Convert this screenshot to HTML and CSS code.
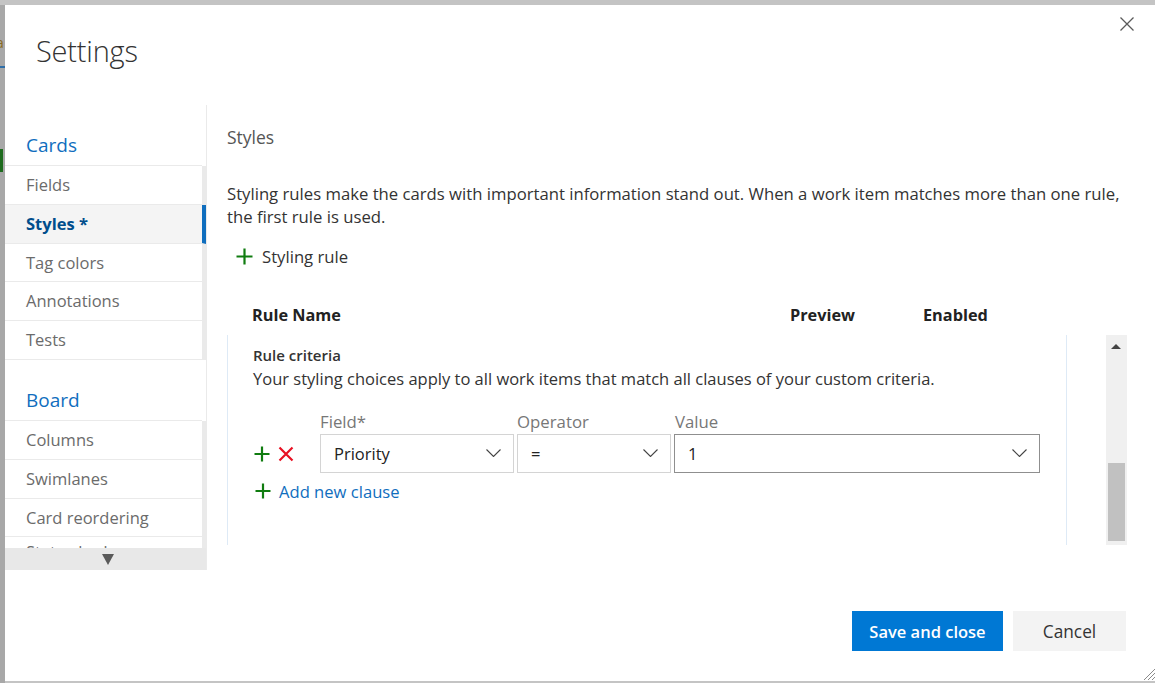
FILE: index.html
```html
<!DOCTYPE html>
<html>
<head>
<meta charset="utf-8">
<link rel="stylesheet" href="styles.css">
</head>
<body>
<div class="backdrop">
  <div class="under-left">
    <span class="under-a">a</span>
    <span class="under-line"></span>
    <span class="under-green"></span>
  </div>
  <div class="dialog">
    <button class="close" aria-label="Close">
      <svg width="14" height="14" viewBox="0 0 14 14"><path d="M0.5 0.5 L13.5 13.5 M13.5 0.5 L0.5 13.5" stroke="#5a5a5a" stroke-width="1.3" fill="none"/></svg>
    </button>
    <div class="dlg-header">
      <h1 class="title">Settings</h1>
    </div>
    <div class="dlg-body">
      <nav class="nav">
        <div class="nav-scroll">
          <div class="nav-group">Cards</div>
          <div class="nav-item">Fields</div>
          <div class="nav-item selected">Styles *</div>
          <div class="nav-item">Tag colors</div>
          <div class="nav-item">Annotations</div>
          <div class="nav-item last">Tests</div>
          <div class="nav-group">Board</div>
          <div class="nav-item">Columns</div>
          <div class="nav-item">Swimlanes</div>
          <div class="nav-item">Card reordering</div>
          <div class="nav-item partial">Status badge</div>
        </div>
        <div class="nav-down"><span class="tri-down"></span></div>
      </nav>
      <main class="content">
        <h2 class="section-title">Styles</h2>
        <p class="desc">Styling rules make the cards with important information stand out. When a work item matches more than one rule, the first rule is used.</p>
        <div class="add-rule">
          <svg class="plus" width="17" height="17" viewBox="0 0 17 17"><path d="M8.5 0.5 V16.5 M0.5 8.5 H16.5" stroke="#107c10" stroke-width="2.2" fill="none"/></svg>
          <span>Styling rule</span>
        </div>
        <div class="table-head">
          <span class="th-name">Rule Name</span>
          <span class="th-preview">Preview</span>
          <span class="th-enabled">Enabled</span>
        </div>
        <div class="scroll-box">
          <div class="rule-panel">
            <div class="crit-title">Rule criteria</div>
            <div class="crit-desc">Your styling choices apply to all work items that match all clauses of your custom criteria.</div>
            <div class="clause-labels">
              <span class="lbl lbl-field">Field*</span>
              <span class="lbl lbl-op">Operator</span>
              <span class="lbl">Value</span>
            </div>
            <div class="clause-row">
              <div class="row-icons">
                <svg width="16" height="16" viewBox="0 0 16 16"><path d="M8 0.5 V15.5 M0.5 8 H15.5" stroke="#107c10" stroke-width="2.2" fill="none"/></svg>
                <svg width="16" height="16" viewBox="0 0 16 16"><path d="M1.5 1.5 L14.5 14.5 M14.5 1.5 L1.5 14.5" stroke="#e81123" stroke-width="2.2" fill="none"/></svg>
              </div>
              <div class="dd dd-field"><span>Priority</span><svg class="chev" width="15" height="8" viewBox="0 0 15 8"><path d="M0.5 0.5 L7.5 7.5 L14.5 0.5" stroke="#444" stroke-width="1.1" fill="none"/></svg></div>
              <div class="dd dd-op"><span>=</span><svg class="chev" width="15" height="8" viewBox="0 0 15 8"><path d="M0.5 0.5 L7.5 7.5 L14.5 0.5" stroke="#444" stroke-width="1.1" fill="none"/></svg></div>
              <div class="dd dd-value"><span>1</span><svg class="chev" width="15" height="8" viewBox="0 0 15 8"><path d="M0.5 0.5 L7.5 7.5 L14.5 0.5" stroke="#444" stroke-width="1.1" fill="none"/></svg></div>
            </div>
            <div class="add-clause">
              <svg width="16" height="16" viewBox="0 0 16 16"><path d="M8 0.5 V15.5 M0.5 8 H15.5" stroke="#107c10" stroke-width="2.2" fill="none"/></svg>
              <span>Add new clause</span>
            </div>
          </div>
          <div class="vscroll">
            <span class="tri-up"></span>
            <span class="thumb"></span>
          </div>
        </div>
      </main>
    </div>
    <div class="dlg-footer">
      <button class="btn primary">Save and close</button>
      <button class="btn secondary">Cancel</button>
    </div>
    <svg class="grip" width="12" height="12" viewBox="0 0 12 12"><path d="M12 1 L1 12 M12 5 L5 12 M12 9 L9 12" stroke="#8a8a8a" stroke-width="1" fill="none"/></svg>
  </div>
</div>
</body>
</html>
```
FILE: styles.css
```css
* { box-sizing: border-box; }
html, body { margin: 0; padding: 0; }
body {
  width: 1155px;
  height: 683px;
  overflow: hidden;
  background: #c4c4c4;
  font-family: "Open Sans", "Noto Sans", sans-serif;
  color: #333;
}
.backdrop {
  display: flex;
  padding-top: 5px;
  height: 683px;
  position: relative;
}
.under-left {
  width: 5px;
  flex: none;
  background: #a8a8a8;
  position: relative;
  overflow: hidden;
}
.under-a {
  position: absolute;
  left: -4px;
  top: 28px;
  font-size: 14px;
  color: #8a6a20;
}
.under-line {
  position: absolute;
  left: 0;
  top: 61px;
  width: 5px;
  height: 2px;
  background: #2f6ea8;
}
.under-green {
  position: absolute;
  left: 0;
  top: 144px;
  width: 3px;
  height: 23px;
  background: #1e6b1e;
}
.dialog {
  width: 1150px;
  height: 676px;
  background: #fff;
  display: flex;
  flex-direction: column;
  position: relative;
}
.close {
  position: absolute;
  top: 12px;
  right: 21px;
  width: 14px;
  height: 14px;
  padding: 0;
  border: 0;
  background: transparent;
  display: flex;
}
.dlg-header {
  height: 100px;
  flex: none;
  padding: 28px 0 0 31px;
}
.title {
  margin: 0;
  font-size: 29px;
  line-height: 36px;
  font-weight: 300;
  color: #333;
  letter-spacing: -0.2px;
}
.dlg-body {
  height: 465px;
  flex: none;
  display: flex;
}
.nav {
  width: 202px;
  flex: none;
  border-right: 1px solid #eaeaea;
  display: flex;
  flex-direction: column;
}
.nav-scroll {
  height: 443px;
  overflow: hidden;
}
.nav-group {
  height: 61px;
  padding: 27px 0 0 21px;
  font-size: 19px;
  line-height: 26px;
  color: #106ebe;
  border-bottom: 1px solid #eaeaea;
  margin-right: 4px;
}
.nav-item {
  height: 38.8px;
  padding-left: 21px;
  font-size: 16.5px;
  line-height: 37px;
  color: #6b6b6b;
  border-bottom: 1px solid #eaeaea;
  border-right: 4px solid #eaeaea;
}
.nav-item.partial { line-height: 30px; }
.nav-item.selected {
  background: #f4f4f4;
  color: #004e8c;
  font-weight: 700;
  border-right-color: #106ebe;
}
.nav-down {
  height: 22px;
  background: #e8e8e8;
  display: flex;
  justify-content: center;
  align-items: center;
}
.tri-down {
  width: 0;
  height: 0;
  border-left: 6px solid transparent;
  border-right: 6px solid transparent;
  border-top: 11px solid #5a5a5a;
  margin-left: 4px;
}
.content {
  flex: 1;
  padding: 20px 0 0 20px;
}
.section-title {
  margin: 0;
  font-size: 17.5px;
  line-height: 24px;
  font-weight: 400;
  color: #555;
}
.desc {
  margin: 33px 0 0 0;
  width: 900px;
  font-size: 16.7px;
  line-height: 23px;
  color: #333;
}
.add-rule {
  margin: 12px 0 0 9px;
  height: 32px;
  display: flex;
  align-items: center;
  gap: 9px;
  font-size: 16.7px;
  color: #333;
}
.table-head {
  height: 32px;
  margin-top: 27px;
  display: flex;
  align-items: center;
  font-size: 16.3px;
  font-weight: 700;
  color: #222;
}
.th-name { margin-left: 25px; width: 538px; }
.th-preview { width: 133px; }
.scroll-box {
  margin-top: 4px;
  width: 900px;
  height: 210px;
  display: flex;
  justify-content: space-between;
}
.rule-panel {
  width: 840px;
  border-left: 1px solid #deeaf6;
  border-right: 1px solid #deeaf6;
  padding: 10px 0 0 25px;
}
.crit-title {
  font-size: 15px;
  line-height: 21px;
  font-weight: 600;
  color: #333;
}
.crit-desc {
  font-size: 16.5px;
  line-height: 25px;
  color: #333;
}
.clause-labels {
  margin-top: 20px;
  height: 22px;
  display: flex;
  padding-left: 67px;
  font-size: 16.8px;
  line-height: 22px;
  color: #777;
}
.lbl-field { width: 197px; }
.lbl-op { width: 158px; }
.clause-row {
  height: 40px;
  display: flex;
  align-items: center;
}
.row-icons {
  width: 67px;
  display: flex;
  gap: 8px;
  padding-left: 1px;
  padding-top: 1px;
}
.dd {
  height: 39px;
  border: 1px solid #d4d4d4;
  display: flex;
  align-items: center;
  justify-content: space-between;
  padding: 0 12px 0 13px;
  font-size: 16.5px;
  color: #222;
  margin-right: 3px;
}
.dd-field { width: 194px; }
.dd-op { width: 154px; }
.dd-value { width: 366px; border-color: #8f8f8f; }
.add-clause {
  margin-top: 2px;
  height: 32px;
  display: flex;
  align-items: center;
  gap: 8px;
  padding-left: 2px;
  font-size: 16.6px;
  color: #106ebe;
}
.vscroll {
  width: 21px;
  height: 210px;
  background: #f0f0f0;
  position: relative;
}
.tri-up {
  position: absolute;
  left: 5px;
  top: 9px;
  width: 0;
  height: 0;
  border-left: 5px solid transparent;
  border-right: 5px solid transparent;
  border-bottom: 5px solid #444;
}
.thumb {
  position: absolute;
  left: 2px;
  top: 128px;
  width: 17px;
  height: 78px;
  background: #c1c1c1;
}
.dlg-footer {
  margin-top: 41px;
  display: flex;
  justify-content: flex-end;
  gap: 10px;
  padding-right: 29px;
}
.btn {
  height: 40px;
  border: 0;
  font-family: "Open Sans", "Noto Sans", sans-serif;
  font-size: 16.5px;
}
.primary {
  width: 151px;
  background: #0078d4;
  color: #fff;
  font-weight: 600;
}
.secondary {
  width: 113px;
  background: #f3f3f3;
  color: #333;
  font-size: 17.3px;
}
.grip {
  position: absolute;
  right: 0;
  bottom: 1px;
}
```
